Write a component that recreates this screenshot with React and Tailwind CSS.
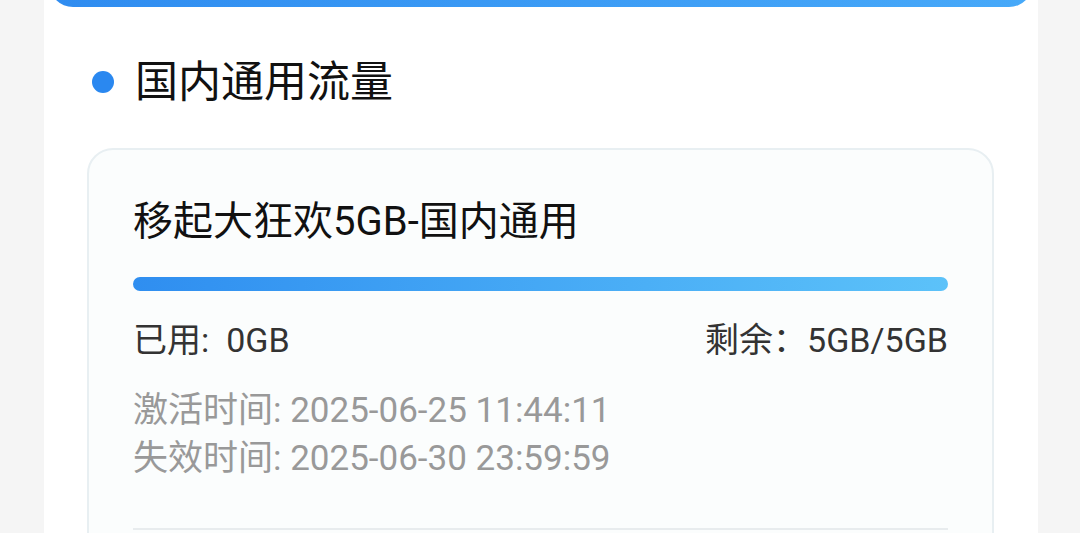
export default function App() {
  const font = { fontFamily: 'Roboto, "Noto Sans CJK SC", sans-serif' }

  return (
    <div className="h-[533px] overflow-hidden bg-[#f5f5f5] pl-[44px] pr-[42px]" style={font}>
      <div className="flow-root h-full bg-white">
        {/* top banner edge */}
        <div className="mx-[5px] -mt-[24px] h-[31px] rounded-b-[24px] bg-gradient-to-r from-[#2f8cf0] to-[#47a9f9]" />

        {/* section title */}
        <div className="mt-[47px] flex items-center pl-[48px]">
          <span className="h-[22px] w-[22px] rounded-full bg-[#2a88f0]" />
          <span className="ml-[21px] text-[43px] leading-[56px] text-[#111]">国内通用流量</span>
        </div>

        {/* package card */}
        <div className="ml-[43px] mt-[38px] w-[907px] rounded-[26px] border-2 border-[#e8eff2] bg-[#fbfdfd] px-[44px] pt-[44px]">
          <div className="text-[40px] leading-[56px] text-[#111]">移起大狂欢5GB-国内通用</div>

          <div className="mt-[27px] h-[14px] rounded-full bg-gradient-to-r from-[#2f8ef0] to-[#5cc2f9]" />

          <div className="mt-[29px] flex items-center justify-between text-[34px] leading-[40px] text-[#333]">
            <span>
              已用:<span className="ml-[17px]">0GB</span>
            </span>
            <span>剩余：5GB/5GB</span>
          </div>

          <div className="mt-[27px] text-[35px] leading-[48px] text-[#999]">
            <div>激活时间: 2025-06-25 11:44:11</div>
            <div>失效时间: 2025-06-30 23:59:59</div>
          </div>

          <div className="mt-[45px] h-[2px] bg-[#e8ecee]" />
          <div className="h-[40px]" />
        </div>
      </div>
    </div>
  )
}
